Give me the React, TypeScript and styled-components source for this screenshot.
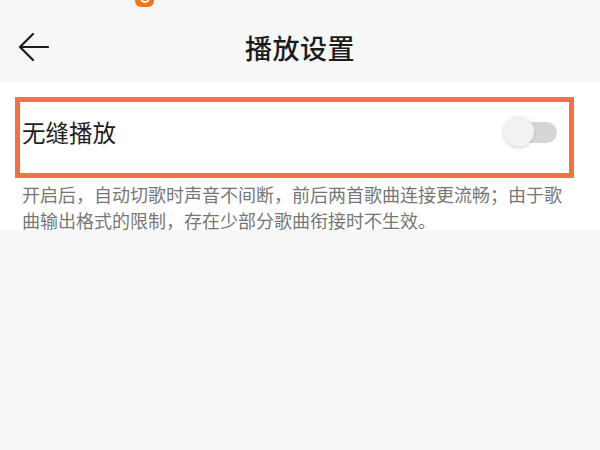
import React from 'react';
import styled, { createGlobalStyle } from 'styled-components';

const GlobalStyle = createGlobalStyle`
  html, body {
    margin: 0;
    padding: 0;
    background: #f7f7f7;
    font-family: 'Noto Sans CJK SC', 'Noto Sans', sans-serif;
  }
`;

const Page = styled.div`
  width: 600px;
  height: 450px;
  background: #f7f7f7;
  overflow: hidden;
`;

const StatusBar = styled.div`
  height: 7px;
  display: flex;
  align-items: flex-end;
  padding-left: 135px;
  overflow: hidden;
`;

const AppBadge = styled.div`
  width: 19px;
  height: 19px;
  border-radius: 6px;
  background: #f5731f;
  display: flex;
  align-items: center;
  justify-content: center;
  &::after {
    content: '';
    width: 10px;
    height: 10px;
    border-radius: 50%;
    border: 2px solid #fff;
    box-sizing: border-box;
  }
`;

const Header = styled.div`
  height: 75px;
  position: relative;
  display: flex;
  align-items: center;
  justify-content: center;
  padding-top: 6px;
  box-sizing: border-box;
`;

const BackButton = styled.div`
  position: absolute;
  left: 18px;
  top: 25px;
  width: 31px;
  height: 30px;
  display: flex;
`;

const Title = styled.div`
  font-size: 27px;
  font-weight: 500;
  color: #1c1c1c;
  letter-spacing: 0.5px;
`;

const Section = styled.div`
  background: #ffffff;
  padding: 15px 26px 0 15px;
  height: 133px;
`;

const Highlight = styled.div`
  border: 5px solid #f86f43;
  display: flex;
  align-items: flex-start;
  justify-content: space-between;
  padding: 14px 12px 0 2px;
  box-sizing: content-box;
  height: 57px;
`;

const Label = styled.div`
  font-size: 23.5px;
  color: #1e1e1e;
  line-height: 32px;
`;

const Switch = styled.div`
  position: relative;
  width: 54px;
  height: 32px;
  display: flex;
  align-items: center;
  justify-content: flex-end;
`;

const Track = styled.div`
  width: 44px;
  height: 21px;
  border-radius: 11px;
  background: #d6d6d6;
`;

const Knob = styled.div`
  position: absolute;
  left: 0;
  top: 0;
  width: 31px;
  height: 31px;
  border-radius: 50%;
  background: #f2f2f2;
  box-shadow: 0 1px 3px rgba(0, 0, 0, 0.18);
`;

const Note = styled.p`
  margin: 3px 0 0 7px;
  width: 545px;
  font-size: 18px;
  line-height: 26px;
  color: #767676;
`;

export default function App() {
  return (
    <Page>
      <GlobalStyle />
      <StatusBar>
        <AppBadge />
      </StatusBar>
      <Header>
        <BackButton>
          <svg width="31" height="30" viewBox="0 0 31 30" fill="none">
            <path
              d="M30 15H3M15 2L2 15l13 13"
              stroke="#1c1c1c"
              strokeWidth="2.2"
              strokeLinecap="round"
              strokeLinejoin="round"
            />
          </svg>
        </BackButton>
        <Title>播放设置</Title>
      </Header>
      <Section>
        <Highlight>
          <Label>无缝播放</Label>
          <Switch>
            <Track />
            <Knob />
          </Switch>
        </Highlight>
        <Note>
          开启后，自动切歌时声音不间断，前后两首歌曲连接更流畅；由于歌曲输出格式的限制，存在少部分歌曲衔接时不生效。
        </Note>
      </Section>
    </Page>
  );
}
